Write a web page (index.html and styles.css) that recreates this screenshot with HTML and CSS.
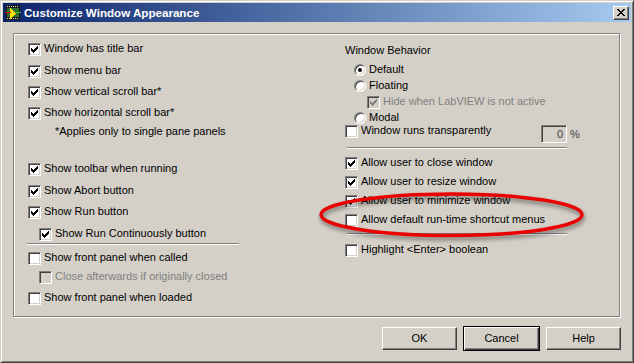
FILE: index.html
```html
<!DOCTYPE html>
<html>
<head>
<meta charset="utf-8">
<title>Customize Window Appearance</title>
<link rel="stylesheet" href="styles.css">
</head>
<body>
<div class="window">
  <div class="titlebar">
    <svg class="app-icon" viewBox="0 0 16 16" shape-rendering="crispEdges">
      <rect x="1" y="0" width="14" height="15" fill="#1a1a1a"/>
      <g fill="#d8d8d8">
        <rect x="2" y="1" width="1" height="1"/><rect x="4" y="1" width="1" height="1"/><rect x="6" y="1" width="1" height="1"/><rect x="8" y="1" width="1" height="1"/><rect x="10" y="1" width="1" height="1"/><rect x="12" y="1" width="1" height="1"/>
        <rect x="2" y="13" width="1" height="1"/><rect x="4" y="13" width="1" height="1"/><rect x="6" y="13" width="1" height="1"/><rect x="8" y="13" width="1" height="1"/><rect x="10" y="13" width="1" height="1"/><rect x="12" y="13" width="1" height="1"/>
      </g>
      <rect x="2" y="3" width="12" height="9" fill="#2f6f2f"/>
      <path d="M5 3h1v1h1v1h1v1h1v1h1v1h1v1h-1v1h-1v1h-1v1h-1v1h-1v1H5z" fill="#f4e400"/>
      <rect x="0" y="7" width="6" height="1" fill="#e00000"/>
      <rect x="11" y="7" width="5" height="1" fill="#20c020"/>
    </svg>
    <span class="title">Customize Window Appearance</span>
    <span class="close-btn"><svg class="close-glyph" viewBox="0 0 8 7" shape-rendering="crispEdges"><path d="M0 0h2v1H0zM6 0h2v1H6zM1 1h2v1H1zM5 1h2v1H5zM2 2h4v1H2zM3 3h2v1H3zM2 4h4v1H2zM1 5h2v1H1zM5 5h2v1H5zM0 6h2v1H0zM6 6h2v1H6z"/></svg></span>
  </div>

  <div class="client">
    <div class="group">
      <div class="col col-left">
        <div class="row h22"><span class="cb"><svg class="chk" viewBox="0 0 7 7" shape-rendering="crispEdges"><path d="M6 0h1v1H6zM5 1h2v1H5zM0 2h1v1H0zM4 2h3v1H4zM0 3h2v1H0zM3 3h3v1H3zM0 4h5v1H0zM1 5h3v1H1zM2 6h1v1H2z"/></svg></span><span class="lbl">Window has title bar</span></div>
        <div class="row h21"><span class="cb"><svg class="chk" viewBox="0 0 7 7" shape-rendering="crispEdges"><path d="M6 0h1v1H6zM5 1h2v1H5zM0 2h1v1H0zM4 2h3v1H4zM0 3h2v1H0zM3 3h3v1H3zM0 4h5v1H0zM1 5h3v1H1zM2 6h1v1H2z"/></svg></span><span class="lbl">Show menu bar</span></div>
        <div class="row h21"><span class="cb"><svg class="chk" viewBox="0 0 7 7" shape-rendering="crispEdges"><path d="M6 0h1v1H6zM5 1h2v1H5zM0 2h1v1H0zM4 2h3v1H4zM0 3h2v1H0zM3 3h3v1H3zM0 4h5v1H0zM1 5h3v1H1zM2 6h1v1H2z"/></svg></span><span class="lbl">Show vertical scroll bar*</span></div>
        <div class="row h18"><span class="cb"><svg class="chk" viewBox="0 0 7 7" shape-rendering="crispEdges"><path d="M6 0h1v1H6zM5 1h2v1H5zM0 2h1v1H0zM4 2h3v1H4zM0 3h2v1H0zM3 3h3v1H3zM0 4h5v1H0zM1 5h3v1H1zM2 6h1v1H2z"/></svg></span><span class="lbl">Show horizontal scroll bar*</span></div>
        <div class="note">*Applies only to single pane panels</div>

        <div class="row h22"><span class="cb"><svg class="chk" viewBox="0 0 7 7" shape-rendering="crispEdges"><path d="M6 0h1v1H6zM5 1h2v1H5zM0 2h1v1H0zM4 2h3v1H4zM0 3h2v1H0zM3 3h3v1H3zM0 4h5v1H0zM1 5h3v1H1zM2 6h1v1H2z"/></svg></span><span class="lbl">Show toolbar when running</span></div>
        <div class="row h21"><span class="cb"><svg class="chk" viewBox="0 0 7 7" shape-rendering="crispEdges"><path d="M6 0h1v1H6zM5 1h2v1H5zM0 2h1v1H0zM4 2h3v1H4zM0 3h2v1H0zM3 3h3v1H3zM0 4h5v1H0zM1 5h3v1H1zM2 6h1v1H2z"/></svg></span><span class="lbl">Show Abort button</span></div>
        <div class="row h22"><span class="cb"><svg class="chk" viewBox="0 0 7 7" shape-rendering="crispEdges"><path d="M6 0h1v1H6zM5 1h2v1H5zM0 2h1v1H0zM4 2h3v1H4zM0 3h2v1H0zM3 3h3v1H3zM0 4h5v1H0zM1 5h3v1H1zM2 6h1v1H2z"/></svg></span><span class="lbl">Show Run button</span></div>
        <div class="row h15 indent"><span class="cb"><svg class="chk" viewBox="0 0 7 7" shape-rendering="crispEdges"><path d="M6 0h1v1H6zM5 1h2v1H5zM0 2h1v1H0zM4 2h3v1H4zM0 3h2v1H0zM3 3h3v1H3zM0 4h5v1H0zM1 5h3v1H1zM2 6h1v1H2z"/></svg></span><span class="lbl">Show Run Continuously button</span></div>
        <div class="sep sep-left"></div>
        <div class="row h19"><span class="cb"></span><span class="lbl">Show front panel when called</span></div>
        <div class="row h21 indent disabled"><span class="cb"></span><span class="lbl">Close afterwards if originally closed</span></div>
        <div class="row h13"><span class="cb"></span><span class="lbl">Show front panel when loaded</span></div>
      </div>

      <div class="col col-right">
        <div class="heading">Window Behavior</div>
        <div class="row h16 radio-row"><span class="rb on"></span><span class="lbl">Default</span></div>
        <div class="row h16 radio-row"><span class="rb"></span><span class="lbl">Floating</span></div>
        <div class="row h16 sub disabled"><span class="cb"><svg class="chk" viewBox="0 0 7 7" shape-rendering="crispEdges"><path d="M6 0h1v1H6zM5 1h2v1H5zM0 2h1v1H0zM4 2h3v1H4zM0 3h2v1H0zM3 3h3v1H3zM0 4h5v1H0zM1 5h3v1H1zM2 6h1v1H2z"/></svg></span><span class="lbl">Hide when LabVIEW is not active</span></div>
        <div class="row h13 radio-row"><span class="rb"></span><span class="lbl">Modal</span></div>
        <div class="row h22"><span class="cb"></span><span class="lbl lbl-fixed">Window runs transparently</span><span class="num">0</span><span class="pct">%</span></div>
        <div class="sep sep-right sep-a"></div>
        <div class="row h19"><span class="cb"><svg class="chk" viewBox="0 0 7 7" shape-rendering="crispEdges"><path d="M6 0h1v1H6zM5 1h2v1H5zM0 2h1v1H0zM4 2h3v1H4zM0 3h2v1H0zM3 3h3v1H3zM0 4h5v1H0zM1 5h3v1H1zM2 6h1v1H2z"/></svg></span><span class="lbl">Allow user to close window</span></div>
        <div class="row h19"><span class="cb"><svg class="chk" viewBox="0 0 7 7" shape-rendering="crispEdges"><path d="M6 0h1v1H6zM5 1h2v1H5zM0 2h1v1H0zM4 2h3v1H4zM0 3h2v1H0zM3 3h3v1H3zM0 4h5v1H0zM1 5h3v1H1zM2 6h1v1H2z"/></svg></span><span class="lbl">Allow user to resize window</span></div>
        <div class="row h19"><span class="cb"><svg class="chk" viewBox="0 0 7 7" shape-rendering="crispEdges"><path d="M6 0h1v1H6zM5 1h2v1H5zM0 2h1v1H0zM4 2h3v1H4zM0 3h2v1H0zM3 3h3v1H3zM0 4h5v1H0zM1 5h3v1H1zM2 6h1v1H2z"/></svg></span><span class="lbl">Allow user to minimize window</span></div>
        <div class="row h19"><span class="cb"></span><span class="lbl">Allow default run-time shortcut menus</span></div>
        <div class="sep sep-right sep-b"></div>
        <div class="row h13"><span class="cb"></span><span class="lbl">Highlight &lt;Enter&gt; boolean</span></div>
      </div>
    </div>

    <div class="buttons">
      <span class="btn">OK</span>
      <span class="btn btn-default">Cancel</span>
      <span class="btn">Help</span>
    </div>
  </div>

  <svg class="annotation" viewBox="0 0 276 58">
    <ellipse class="ring" cx="135.5" cy="26.75" rx="130.5" ry="20.75"/>
  </svg>
</div>
</body>
</html>
```

FILE: styles.css
```css
* { box-sizing: border-box; }

html, body {
  margin: 0;
  padding: 0;
}

body {
  width: 634px;
  height: 363px;
  overflow: hidden;
  background: #d4d0c8;
  font-family: "Liberation Sans", Arial, sans-serif;
  font-size: 11px;
  color: #000;
}

.window {
  position: relative;
  width: 634px;
  height: 363px;
  background: #d4d0c8;
  border: 1px solid;
  border-color: #d4d0c8 #404040 #404040 #d4d0c8;
  box-shadow: inset 1px 1px #fff, inset -1px -1px #808080;
  padding: 2px;
  display: flex;
  flex-direction: column;
}

/* ---------- title bar ---------- */
.titlebar {
  height: 19px;
  flex: none;
  display: flex;
  align-items: center;
  padding: 0 2px 0 2px;
  background: linear-gradient(to right, #0a246a, #a6caf0);
  color: #fff;
}

.app-icon {
  width: 16px;
  height: 16px;
  flex: none;
  margin-right: 3px;
  margin-top: 1px;
}

.title {
  flex: 1;
  font-weight: bold;
  font-size: 11.6px;
  line-height: 19px;
  white-space: nowrap;
}

.close-btn {
  width: 16px;
  height: 14px;
  flex: none;
  background: #d4d0c8;
  border: 1px solid;
  border-color: #fff #404040 #404040 #fff;
  box-shadow: inset -1px -1px #808080;
  display: flex;
  padding: 2px 0 0 3px;
}

.close-glyph {
  width: 8px;
  height: 7px;
  fill: #000;
}

/* ---------- client ---------- */
.client {
  flex: 1;
  display: flex;
  flex-direction: column;
  padding: 11px 10px 9px 10px;
}

.group {
  height: 284px;
  flex: none;
  margin-right: 1px;
  border: 1px solid #808080;
  box-shadow: inset 1px 1px #fff, 1px 1px #fff;
  display: flex;
}

.col {
  display: flex;
  flex-direction: column;
}

.col-left {
  width: 331px;
  flex: none;
  padding: 9px 0 0 14px;
}

.col-right {
  flex: 1;
  padding-top: 10px;
}

.row {
  display: flex;
  align-items: flex-start;
  flex: none;
  white-space: nowrap;
}

.h13 { height: 13px; }
.h15 { height: 15px; }
.h16 { height: 16px; }
.h18 { height: 18px; }
.h19 { height: 19px; }
.h21 { height: 21px; }
.h22 { height: 22px; }

.indent { padding-left: 11px; }
.radio-row { padding-left: 9px; }
.sub { padding-left: 22px; }

.lbl {
  margin-left: 3px;
  margin-top: -1px;
  line-height: 13px;
}

.disabled .lbl { color: #808080; }

.note {
  height: 38px;
  flex: none;
  padding-left: 27px;
  line-height: 13px;
  white-space: nowrap;
}

.heading {
  height: 20px;
  flex: none;
  line-height: 13px;
}

/* checkbox */
.cb {
  width: 13px;
  height: 13px;
  flex: none;
  background: #fff;
  border: 1px solid;
  border-color: #808080 #fff #fff #808080;
  box-shadow: inset 1px 1px #404040, inset -1px -1px #d4d0c8;
  display: flex;
  align-items: center;
  justify-content: center;
}

.chk {
  width: 7px;
  height: 7px;
  fill: #000;
}

.disabled .cb { background: #d4d0c8; }
.disabled .chk { fill: #808080; }

/* radio */
.rb {
  width: 12px;
  height: 12px;
  flex: none;
  border-radius: 50%;
  background: #fff;
  border: 1px solid;
  border-color: #808080 #fff #fff #808080;
  box-shadow: inset 1px 1px #404040, inset -1px -1px #d4d0c8;
  display: flex;
  align-items: center;
  justify-content: center;
}

.rb.on::after {
  content: "";
  width: 4px;
  height: 4px;
  border-radius: 50%;
  background: #000;
}

/* numeric */
.lbl-fixed { width: 180px; }

.num {
  width: 26px;
  height: 18px;
  flex: none;
  background: #d4d0c8;
  border: 1px solid;
  border-color: #808080 #fff #fff #808080;
  box-shadow: inset 1px 1px #404040, inset -1px -1px #d4d0c8;
  text-align: right;
  padding-right: 3px;
  line-height: 16px;
  color: #404040;
}

.pct {
  margin-left: 3px;
  line-height: 18px;
  color: #404040;
}

/* separators */
.sep {
  height: 2px;
  flex: none;
  border-top: 1px solid #808080;
  border-bottom: 1px solid #fff;
}

.sep-left {
  width: 212px;
  margin-left: -1px;
  margin-bottom: 7px;
}

.sep-right {
  width: 220px;
  margin-left: 2px;
}

.sep-a { margin-bottom: 8px; }
.sep-b { margin-bottom: 9px; }

/* buttons */
.buttons {
  margin-top: 9px;
  height: 25px;
  display: flex;
  justify-content: flex-end;
  align-items: center;
  gap: 6px;
}

.btn {
  width: 75px;
  height: 23px;
  background: #d4d0c8;
  border: 1px solid;
  border-color: #fff #404040 #404040 #fff;
  box-shadow: inset -1px -1px #808080;
  display: flex;
  align-items: center;
  justify-content: center;
  line-height: 13px;
}

.btn-default {
  width: 77px;
  height: 25px;
  border: 1px solid #000;
  box-shadow: inset 1px 1px #fff, inset -1px -1px #404040, inset -2px -2px #808080;
}

/* annotation overlay */
.annotation {
  position: absolute;
  left: 315px;
  top: 187px;
  width: 276px;
  height: 58px;
  overflow: visible;
  pointer-events: none;
}

.ring {
  fill: none;
  stroke: #ea0000;
  stroke-width: 3.5;
  filter: drop-shadow(1px 3px 2px rgba(0, 0, 0, 0.45));
}
```
